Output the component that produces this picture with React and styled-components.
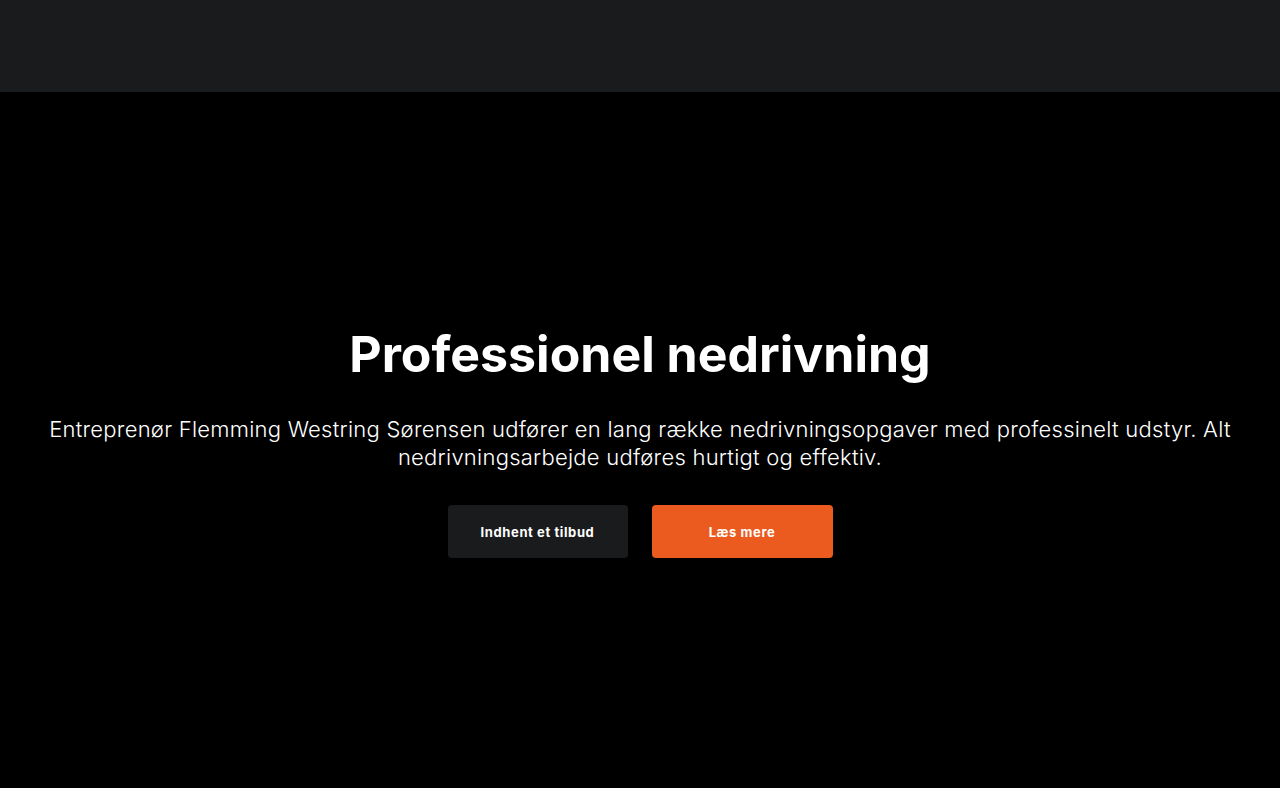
import React from "react";
import styled, { createGlobalStyle } from "styled-components";

const GlobalStyle = createGlobalStyle`
    html, body {
        margin: 0;
        padding: 0;
        background: #ffffff;
        font-family: "Inter", "Noto Sans", sans-serif;
    }
`;

function App() {
    return (
        <>
            <GlobalStyle />
            <Page>
                <Header />
                <Hero>
                    <Title>Professionel nedrivning</Title>
                    <Lead>
                        Entreprenør Flemming Westring Sørensen udfører en lang række nedrivningsopgaver med
                        professinelt udstyr. Alt nedrivningsarbejde udføres hurtigt og effektiv.
                    </Lead>
                    <Actions>
                        <Button $variant="dark" $width="180px">Indhent et tilbud</Button>
                        <Button $variant="orange" $width="181px">Læs mere</Button>
                    </Actions>
                </Hero>
            </Page>
        </>
    );
}

const Page = styled.div`
    display: flex;
    flex-direction: column;
`;

const Header = styled.header`
    height: 92px;
    background: #1a1b1d;
`;

const Hero = styled.section`
    height: 696px;
    background: #000000;
    display: flex;
    flex-direction: column;
    align-items: center;
    justify-content: center;
    padding: 2px 40px 0;
    box-sizing: border-box;
    color: #ffffff;
    text-align: center;
`;

const Title = styled.h1`
    margin: 0;
    font-size: 50px;
    font-weight: 700;
    line-height: 1.2;
    letter-spacing: 0;
`;

const Lead = styled.p`
    margin: 31px 0 0;
    font-size: 22px;
    font-weight: 300;
    line-height: 28px;
    letter-spacing: 0.25px;
    color: #ffffff;
`;

const Actions = styled.div`
    display: flex;
    gap: 24px;
    margin-top: 34px;
`;

const Button = styled.a`
    display: flex;
    align-items: center;
    justify-content: center;
    width: ${(p) => p.$width};
    height: 53px;
    border-radius: 4px;
    font-size: 13px;
    font-weight: 700;
    letter-spacing: 0.6px;
    color: #ffffff;
    cursor: pointer;
    background: ${(p) => (p.$variant === "orange" ? "#eb5a1e" : "#1a1b1d")};
`;

export default App;
